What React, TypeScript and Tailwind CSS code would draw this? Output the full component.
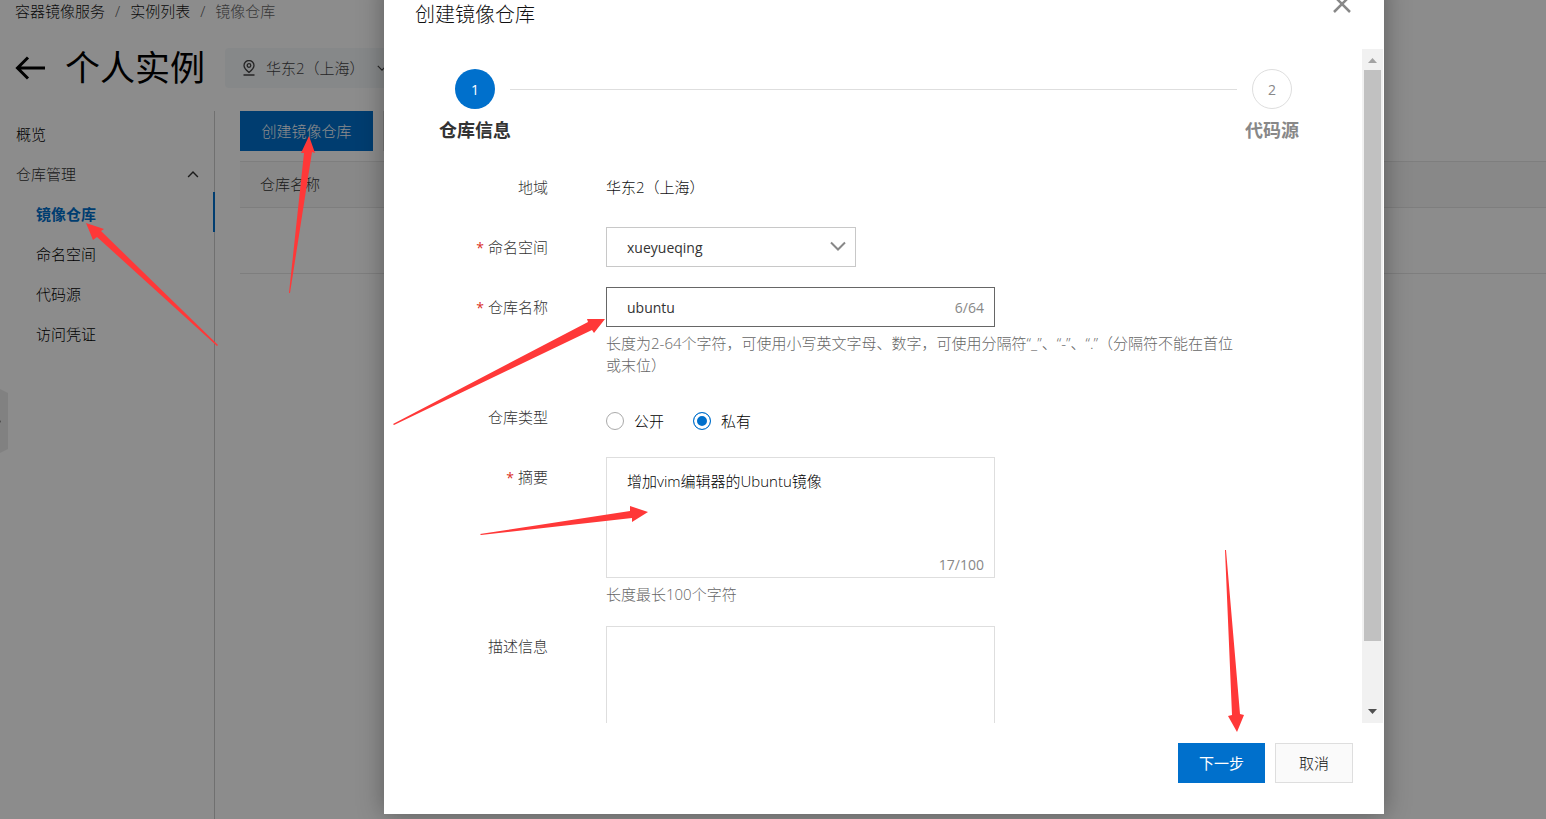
import { useState } from "react";
import type { ReactNode } from "react";

const sideLinks = ["镜像仓库", "命名空间", "代码源", "访问凭证"];

// tail (two points), neck, head, tip, head, neck
const pointers = [
  "218,345 217,346 97,237 93,240 86,223 104,229 101,231",
  "289,293 290,293 312,152 315,153 309,136 301,153 304,153",
  "393,424 394,425 592,330 594,333 605,319 587,319 588,322",
  "480,534 481,535 632,518 632,522 648,512 630,506 630,511",
  "1225,550 1226,550 1240,714 1244,715 1237,732 1228,716 1232,715",
];

function Chevron({ className }: { className: string }) {
  return (
    <svg viewBox="0 0 16 10" className={className} fill="none" stroke="currentColor" strokeWidth="2">
      <path d="M1 1.5 8 8.5 15 1.5" />
    </svg>
  );
}

function PageHeader() {
  return (
    <header>
      <nav className="flex h-[22px] items-center gap-2.5 pl-[15px]">
        <a href="#service">容器镜像服务</a>
        <span className="text-[#555]">/</span>
        <a href="#instances">实例列表</a>
        <span className="text-[#555]">/</span>
        <span className="text-[#666]">镜像仓库</span>
      </nav>
      <div className="mt-[26px] flex h-10 items-center pl-[15px]">
        <button type="button" aria-label="返回">
          <svg viewBox="0 0 30 24" className="h-6 w-[30px]" fill="none" stroke="#000" strokeWidth="3">
            <path d="M30 12H3M13 1.500 2.500 12 13 22.500" />
          </svg>
        </button>
        <h1 className="ml-5 text-[35px] leading-10 font-normal text-black">个人实例</h1>
        <button
          type="button"
          className="ml-5 flex h-10 items-center rounded-sm bg-[#f5f7fa] pr-4 pl-[17px] text-[#444]"
        >
          <svg viewBox="0 0 14 16" className="h-4 w-3.5" fill="none" stroke="currentColor" strokeWidth="1.3">
            <path d="M7 12.500C4 10 2 8 2 5.500a5 5 0 0 1 10 0C12 8 10 10 7 12.500zM1.500 15h11" />
            <circle cx="7" cy="5.500" r="1.800" />
          </svg>
          <span className="ml-2.5">华东2（上海）</span>
          <Chevron className="ml-3 h-1.5 w-2.5" />
        </button>
      </div>
    </header>
  );
}

function Sidebar() {
  return (
    <nav className="flex w-[215px] shrink-0 flex-col border-r border-[#ccc] pt-px text-black">
      <a href="#overview" className="flex h-10 items-center pt-1 pl-4">
        概览
      </a>
      <button type="button" className="flex h-10 items-center justify-between pt-1 pr-[15px] pl-4 text-[#333]">
        仓库管理
        <Chevron className="h-[7px] w-3 rotate-180" />
      </button>
      {sideLinks.map((link, i) => (
        <a
          key={link}
          href={`#${link}`}
          className={
            i === 0
              ? "-mr-px flex h-10 items-center border-r-2 border-[#0070cc] pt-1 pl-9 font-bold text-[#0070cc]"
              : "flex h-10 items-center pt-1 pl-9"
          }
        >
          {link}
        </a>
      ))}
    </nav>
  );
}

function RepoList() {
  return (
    <main className="flex-1 pl-[25px]">
      <div className="flex gap-2.5">
        <button type="button" className="h-10 w-[133px] bg-[#0070cc] text-white">
          创建镜像仓库
        </button>
        <button type="button" aria-label="刷新" className="h-10 w-10 border border-[#ddd]" />
      </div>
      <table className="mt-2.5 w-full border-collapse text-left">
        <thead>
          <tr className="h-[46px] border-y border-[#e5e5e5] bg-[#f8f8f8]">
            <th className="pl-5 font-light text-[#333]">仓库名称</th>
          </tr>
        </thead>
        <tbody>
          <tr className="h-[66px] border-b border-[#e5e5e5]">
            <td />
          </tr>
        </tbody>
      </table>
    </main>
  );
}

function Steps() {
  return (
    <ol className="flex justify-between pr-[45px] pl-[46px]">
      <li className="flex w-[90px] flex-col items-center">
        <span className="flex h-10 w-10 items-center justify-center rounded-full bg-[#0070cc] text-[14px] font-normal text-white">
          1
        </span>
        <span className="mt-[7px] text-[18px] leading-7 font-bold text-[#333]">仓库信息</span>
      </li>
      <li aria-hidden="true" className="-mx-2.5 mt-5 h-px flex-1 bg-[#dedede]" />
      <li className="flex w-[90px] flex-col items-center">
        <span className="flex h-10 w-10 items-center justify-center rounded-full border border-[#dedede] text-[14px] font-normal text-[#888]">
          2
        </span>
        <span className="mt-[7px] text-[18px] leading-7 font-bold text-[#888]">代码源</span>
      </li>
    </ol>
  );
}

type FieldProps = {
  label: string;
  htmlFor?: string;
  required?: boolean;
  hint?: string;
  children: ReactNode;
};

function Field({ label, htmlFor, required, hint, children }: FieldProps) {
  return (
    <div className="flex gap-[58px]">
      <label htmlFor={htmlFor} className="h-10 w-[164px] shrink-0 text-right leading-10 text-[#333]">
        {required && <span className="mr-1 text-[14px] font-normal text-[#d93026]">*</span>}
        {label}
      </label>
      <div className="min-w-0 flex-1">
        {children}
        {hint && (
          <p className="mt-[5px] mb-px leading-[22px] text-[#666] [text-spacing-trim:space-all]">{hint}</p>
        )}
      </div>
    </div>
  );
}

function RepoForm() {
  const [name, setName] = useState("ubuntu");
  const [visibility, setVisibility] = useState("私有");
  const [summary, setSummary] = useState("增加vim编辑器的Ubuntu镜像");

  return (
    <form className="mt-[23px] flex flex-col gap-5 pr-[114px]">
      <Field label="地域">
        <p className="leading-10">华东2（上海）</p>
      </Field>
      <Field label="命名空间" htmlFor="namespace" required>
        <div className="relative w-[250px]">
          <select
            id="namespace"
            className="block h-10 w-full appearance-none border border-[#c8c8c8] bg-white px-5 text-[14px] font-normal text-[#333] outline-none"
          >
            <option>xueyueqing</option>
          </select>
          <Chevron className="pointer-events-none absolute top-3.5 right-2.5 h-2.5 w-4 text-[#888]" />
        </div>
      </Field>
      <Field
        label="仓库名称"
        htmlFor="repo-name"
        required
        hint="长度为2-64个字符，可使用小写英文字母、数字，可使用分隔符“_”、“-”、“.”（分隔符不能在首位或末位）"
      >
        <div className="flex h-10 w-[389px] items-center border border-[#666] pr-2.5 pl-5">
          <input
            id="repo-name"
            value={name}
            onChange={(e) => setName(e.target.value)}
            className="h-full min-w-0 flex-1 text-[14px] font-normal text-[#333] outline-none"
          />
          <span className="text-[14px] font-normal text-[#888]">{name.length}/64</span>
        </div>
      </Field>
      <Field label="仓库类型">
        <div className="flex h-10 items-center gap-[29px] pt-2 text-black">
          {["公开", "私有"].map((option) => (
            <label key={option} className="flex items-center gap-2.5">
              <input
                type="radio"
                name="visibility"
                checked={visibility === option}
                onChange={() => setVisibility(option)}
                className="h-[18px] w-[18px] appearance-none rounded-full border border-[#aaa] bg-white checked:border-[#0070cc] checked:bg-[#0070cc] checked:shadow-[inset_0_0_0_3px_white]"
              />
              {option}
            </label>
          ))}
        </div>
      </Field>
      <Field label="摘要" htmlFor="summary" required hint="长度最长100个字符">
        <div className="flex h-[121px] w-[389px] flex-col border border-[#dedede]">
          <textarea
            id="summary"
            value={summary}
            onChange={(e) => setSummary(e.target.value)}
            className="min-h-0 flex-1 resize-none px-5 pt-3 leading-[22px] text-black outline-none"
          />
          <span className="pr-2.5 text-right text-[14px] leading-6 font-normal text-[#888]">
            {summary.length}/100
          </span>
        </div>
      </Field>
      <Field label="描述信息" htmlFor="description">
        <textarea
          id="description"
          className="block h-[121px] w-[389px] resize-none border border-[#dedede] px-5 pt-3 outline-none"
        />
      </Field>
    </form>
  );
}

function ScrollBar() {
  return (
    <div className="mr-px flex w-[21px] shrink-0 flex-col items-center bg-[#f1f1f1]">
      <svg viewBox="0 0 21 21" className="h-[21px] w-[21px] shrink-0" fill="#a3a3a3">
        <path d="M6 14h9l-4.500-5z" />
      </svg>
      <div className="w-[17px] flex-[571] bg-[#c1c1c1]" />
      <div className="flex-[61]" />
      <svg viewBox="0 0 21 21" className="h-[21px] w-[21px] shrink-0" fill="#505050">
        <path d="M6 7h9l-4.500 5z" />
      </svg>
    </div>
  );
}

function CreateDialog() {
  return (
    <section
      role="dialog"
      aria-labelledby="dialog-title"
      className="-mt-5 flex w-full max-w-[1000px] flex-col bg-white text-[#111] shadow-[0_0_24px_rgba(0,0,0,0.35)]"
    >
      <div className="flex h-[69px] shrink-0 items-start justify-between pt-[15px] pr-[33px] pl-[31px]">
        <h2 id="dialog-title" className="pt-[5px] text-[20px] leading-[30px]">
          创建镜像仓库
        </h2>
        <button type="button" aria-label="关闭">
          <svg viewBox="0 0 18 18" className="h-[18px] w-[18px]" fill="none" stroke="#888" strokeWidth="2.500">
            <path d="M1 1l16 16M17 1 1 17" />
          </svg>
        </button>
      </div>
      <div className="flex min-h-0 flex-1">
        <div className="min-w-0 flex-1 overflow-hidden pt-5">
          <Steps />
          <RepoForm />
        </div>
        <ScrollBar />
      </div>
      <footer className="flex shrink-0 justify-end gap-2.5 pt-5 pr-[31px] pb-[31px]">
        <button type="button" className="h-10 bg-[#0070cc] px-[21px] font-normal text-white">
          下一步
        </button>
        <button type="button" className="h-10 border border-[#dedede] bg-[#fafafa] px-[23px]">
          取消
        </button>
      </footer>
    </section>
  );
}

export default function App() {
  return (
    <div className="relative h-screen overflow-hidden bg-white font-['Open_Sans','Noto_Sans_CJK_SC',sans-serif] text-[15px] font-light text-[#111]">
      <div className="flex h-full flex-col">
        <PageHeader />
        <div className="mt-[23px] flex flex-1">
          <Sidebar />
          <RepoList />
        </div>
      </div>
      <svg viewBox="0 0 8 64" className="absolute top-[389px] left-0 h-16 w-2">
        <path d="M0 0 8 4v56l-8 4z" fill="#ebebeb" />
        <path d="M0 31l1 1.500-1 1.500z" fill="#888" />
      </svg>

      <div className="absolute inset-0 flex bg-black/45 pb-[5px] pl-96">
        <CreateDialog />
      </div>

      <svg className="pointer-events-none absolute inset-0 h-full w-full" fill="#ff3838">
        {pointers.map((points) => (
          <polygon key={points} points={points} />
        ))}
      </svg>
    </div>
  );
}
